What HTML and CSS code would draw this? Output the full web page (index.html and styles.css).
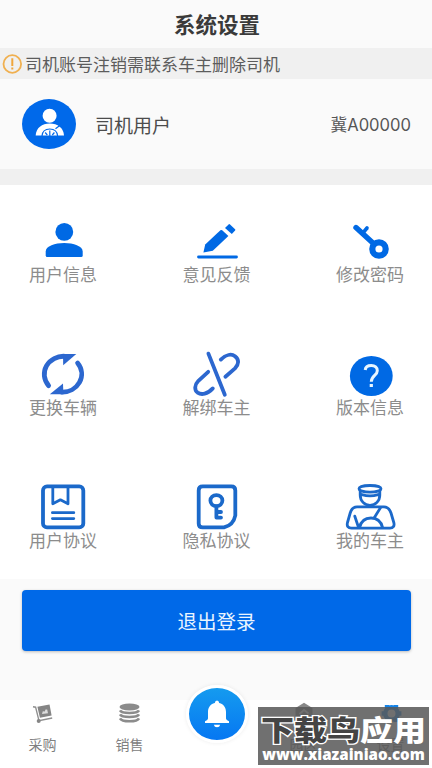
FILE: index.html
```html
<!DOCTYPE html>
<html lang="zh-CN">
<head>
    <meta charset="UTF-8">
    <meta name="viewport" content="width=device-width, initial-scale=1.0">
    <title>系统设置</title>
    <link rel="stylesheet" href="styles.css">
</head>
<body>

    <div class="page">
        <header class="title-bar">
            <h1>系统设置</h1>
        </header>

        <div class="notice">
            <svg class="notice-icon" width="20" height="20" viewBox="0 0 20 20">
                <circle cx="10.3" cy="10" r="8.8" fill="none" stroke="#f0b050" stroke-width="1.8"/>
                <path d="M10.3 4.3v7.6M10.3 13.4v2.2" fill="none" stroke="#f0a63c" stroke-width="2"/>
            </svg>
            <span>司机账号注销需联系车主删除司机</span>
        </div>

        <section class="user">
            <svg class="avatar" width="54" height="50" viewBox="0 0 54 50">
                <ellipse cx="27" cy="25" rx="27" ry="25" fill="#0069ea"/>
                <circle cx="27.6" cy="16.8" r="7" fill="#fff"/>
                <path d="M13.7 36.6C14 29 20 24.6 27.8 24.6S41.6 29 42 36.6Z" fill="#fff"/>
                <path d="M20 37C20.4 32 23.4 30 27.8 30S35.2 32 35.6 37M27.8 31.5V37M23.2 33.5L25.3 36M32.4 33.5L30.3 36M33.5 29.8L38.5 26" fill="none" stroke="#0069ea" stroke-width="1.2"/>
            </svg>
            <span class="user-name">司机用户</span>
            <span class="plate">冀A00000</span>
        </section>

        <section class="menu">
            <div class="menu-item">
                <svg class="menu-icon" viewBox="0 0 68 50">
                    <circle class="fill" cx="35.3" cy="15.9" r="8.9"/>
                    <path class="fill" d="M16.7 39.5V35.5C16.7 30 26 27 35.2 27S53.7 30 53.7 35.5V39.5Q53.7 41 52.2 41H18.2Q16.7 41 16.7 39.5Z"/>
                </svg>
                <span>用户信息</span>
            </div>
            <div class="menu-item">
                <svg class="menu-icon" viewBox="0 0 68 50">
                    <path class="fill" d="M20.4 36.6L22.2 28.6 37.4 14.2Q38.4 13.6 39.2 14.2L45.4 19.9 29.8 34.8Z"/>
                    <path class="fill" d="M42 12L45.6 8.4Q46.3 7.8 47 8.4L52.1 13.2Q52.7 13.9 52.1 14.6L48.8 18Z"/>
                    <path class="line thin" d="M15.5 41H53.5"/>
                </svg>
                <span>意见反馈</span>
            </div>
            <div class="menu-item">
                <svg class="menu-icon" viewBox="0 0 68 50">
                    <circle cx="43" cy="33" r="6.7" fill="none" stroke="#0069e4" stroke-width="6.2"/>
                    <path d="M20 11.6L38 28" fill="none" stroke="#0069e4" stroke-width="5.4" stroke-linecap="round"/>
                    <path d="M26.5 17.5L31 12" fill="none" stroke="#0069e4" stroke-width="3.6" stroke-linecap="round"/>
                </svg>
                <span>修改密码</span>
            </div>

            <div class="menu-item">
                <svg class="menu-icon soft" viewBox="0 0 68 50">
                    <path class="line thick" d="M19.6 36.6A19.3 18 0 0 1 36 7.3"/>
                    <path class="fill" d="M34 5L47.3 5 34.2 16.2Z"/>
                    <path class="line thick" d="M48.6 14A19.3 18 0 0 1 32.4 43"/>
                    <path class="fill" d="M34.4 45.3L20.8 45.3 34 34.6Z"/>
                </svg>
                <span>更换车辆</span>
            </div>
            <div class="menu-item">
                <svg class="menu-icon soft" viewBox="0 0 68 50">
                    <path class="line" d="M25.4 4.6L41.8 45.8"/>
                    <path class="line" d="M37.8 10.6C43 5.4 48.5 4.6 52 7.3C56.3 10.6 56 15.4 52 19.4L42.4 27.8"/>
                    <path class="line" d="M25.2 22.8L15.4 31.8C11.4 36 11.2 41 14.6 43.6C18.4 46.2 24.5 45.2 29.8 39.4"/>
                </svg>
                <span>解绑车主</span>
            </div>
            <div class="menu-item">
                <svg class="menu-icon" viewBox="0 0 68 50">
                    <ellipse class="fill" cx="35.3" cy="27" rx="21.4" ry="20"/>
                    <path d="M29.2 21C29.5 18 32 16.6 35.3 16.6C39 16.6 41.3 18.6 41.3 21.7C41.3 26.4 35.3 26.5 35.3 32.8" fill="none" stroke="#e8f6ff" stroke-width="3"/>
                    <rect x="33.7" y="35" width="3.2" height="3" fill="#e8f6ff"/>
                </svg>
                <span>版本信息</span>
            </div>

            <div class="menu-item">
                <svg class="menu-icon deep" viewBox="0 0 68 50">
                    <rect class="line" x="14" y="4.4" width="40.3" height="41" rx="4"/>
                    <path class="line thin" d="M23.8 4.4V21.8L31.4 17.8 39 21.8V4.4M23.4 30.7H44.8M23.4 36.6H44.8"/>
                </svg>
                <span>用户协议</span>
            </div>
            <div class="menu-item">
                <svg class="menu-icon deep" viewBox="0 0 68 50">
                    <path class="line" d="M19.7 4.4H48.3Q52.3 4.4 52.3 8.4V33.5C51 40 47 44 41 45.4H19.7Q15.7 45.4 15.7 41.4V8.4Q15.7 4.4 19.7 4.4Z"/>
                    <ellipse class="line" cx="33.4" cy="18.6" rx="6" ry="5.5"/>
                    <path class="line" d="M33.4 24.4V35.6M34 30H38M34 35.6H38"/>
                </svg>
                <span>隐私协议</span>
            </div>
            <div class="menu-item">
                <svg class="menu-icon deep" viewBox="0 0 68 50">
                    <ellipse class="line thin" cx="34" cy="6.8" rx="11" ry="3.3"/>
                    <path class="line thin" d="M24.2 9.5V13C24.2 19 28.5 23.3 34 23.3S43.8 19 43.8 13V9.5M26 12.7Q34 15.2 42 12.7"/>
                    <path class="line thin" d="M21 24.8H48C52.5 24.8 53.8 27.5 55 31L57.8 40.5C58.8 44 57 46.2 54 46.2H15.5C12 46.2 10.6 44 11.5 40.5L14.2 31C15.2 27.5 16.8 24.8 21 24.8Z"/>
                    <path class="line thin" d="M23.5 45.6C25 39 29.5 36 35 36S45 39 46.6 45.6M18.8 34.2L22.4 45M44.6 25.6L38.4 35.4"/>
                </svg>
                <span>我的车主</span>
            </div>
        </section>

        <section class="actions">
            <button class="logout">退出登录</button>
        </section>

        <nav class="tabs">
            <div class="tab">
                <svg class="tab-icon" viewBox="0 0 24 24">
                    <path d="M2 4.8L4.6 5.2 8 18.8 21.2 16" fill="none" stroke="#8f8f8f" stroke-width="1.4"/>
                    <path d="M6.4 4.8L18.5 2.6 20.6 13.4 8.9 15.8Z" fill="#858585"/>
                    <path d="M11 12L11.8 9.3 13.8 9.6 14.5 7.5 16.2 7.5 17 11.2Z" fill="#ddd"/>
                    <circle cx="7.7" cy="19" r="2" fill="#858585"/>
                </svg>
                <span>采购</span>
            </div>
            <div class="tab">
                <svg class="tab-icon" viewBox="0 0 24 24">
                    <ellipse cx="11.5" cy="5" rx="10" ry="3.4" fill="#8c8c8c"/>
                    <path d="M2 8.3C4 11.8 19 11.8 21 8.3M2 12.3C4 15.8 19 15.8 21 12.3M2 16.3C4 20.2 19 20.2 21 16.3" fill="none" stroke="#8c8c8c" stroke-width="2.6"/>
                </svg>
                <span>销售</span>
            </div>
            <div class="tab">
                <div class="bell">
                    <svg width="26" height="28" viewBox="0 0 26 28">
                        <path d="M13 .5Q15 .5 15.2 3C20 4.2 22 8 22 12V18.5Q22 20 25 21.3V23H1V21.3Q4 20 4 18.5V12C4 8 6 4.2 10.8 3Q11 .5 13 .5Z" fill="#fff"/>
                        <path d="M9.8 24.8H16.2Q15.5 27.3 13 27.3T9.8 24.8Z" fill="#fff"/>
                    </svg>
                </div>
            </div>
            <div class="tab">
                <svg class="tab-icon" viewBox="0 0 24 24">
                    <path d="M12 .8L20.5 6V17L12 22 3.5 17V6Z" fill="#888"/>
                    <path d="M7.5 12L12 8 16.5 11.5" fill="none" stroke="#fff" stroke-width="1.8"/>
                </svg>
                <span>园区</span>
            </div>
            <div class="tab">
                <svg class="tab-icon" viewBox="0 0 24 24">
                    <circle cx="12.5" cy="11.5" r="6.2" fill="none" stroke="#1684e8" stroke-width="4.4"/>
                    <path d="M8 3V6M17 3V6M8 17V20M17 17V20M2.6 11.5H6M19 11.5H22.4" fill="none" stroke="#1684e8" stroke-width="4.4"/>
                </svg>
                <span>设置</span>
            </div>

            <div class="watermark">
                <div class="mark-name"><span class="outlined">下载鸟</span>应用</div>
                <div class="mark-url">www.xiazainiao.com</div>
            </div>
        </nav>
    </div>

</body>
</html>
```
FILE: styles.css
```css
* {
    box-sizing: border-box;
}
body {
    margin: 0;
    font-family: "Noto Sans CJK SC", sans-serif;
    background-color: #fafafa;
    color: #4c4c4c;
}
svg {
    display: block;
    flex-shrink: 0;
}
.page {
    display: flex;
    flex-direction: column;
    width: 432px;
    height: 768px;
    overflow: hidden;
}
.title-bar {
    display: flex;
    align-items: center;
    justify-content: center;
    height: 48px;
    padding-left: 2px;
}
h1 {
    margin: 0;
    font-size: 21.5px;
    line-height: 30px;
    font-weight: 700;
    color: #3a3a3a;
}
.notice {
    display: flex;
    align-items: center;
    gap: 3px;
    height: 31px;
    padding-left: 2px;
    background-color: #f0f0f0;
    font-size: 17px;
    line-height: 24px;
    color: #5c5c5c;
}
.user {
    display: flex;
    align-items: center;
    height: 106px;
    padding: 0 21px 0 22px;
    border-bottom: 16px solid #f0f0f0;
}
.user-name {
    margin-left: 19px;
    font-size: 19px;
}
.plate {
    margin-left: auto;
    font-family: Inter, "Noto Sans CJK SC", sans-serif;
    font-size: 16.6px;
    color: #555;
}

/* menu grid */
.menu {
    display: grid;
    grid-template-columns: repeat(3, 68px);
    grid-auto-rows: 133px;
    justify-content: space-between;
    height: 394px;
    padding: 0 28px 0 29px;
    background-color: #fff;
}
.menu-item {
    padding-top: 31px;
    font-size: 17px;
    line-height: 17px;
    color: #8c8c8c;
    white-space: nowrap;
}
.menu-icon {
    width: 68px;
    height: 50px;
    margin-bottom: -1px;
    color: #0069e4;
}
.menu-icon.soft {
    color: #2c67cf;
}
.menu-icon.deep {
    color: #1b69ca;
}
.fill {
    fill: currentColor;
}
.line {
    fill: none;
    stroke: currentColor;
    stroke-width: 3.8;
    stroke-linecap: round;
    stroke-linejoin: round;
}
.line.thin {
    stroke-width: 2.8;
}
.line.thick {
    stroke-width: 4.8;
}

.actions {
    height: 121px;
    padding: 11px 21px 0 22px;
}
.logout {
    display: block;
    width: 100%;
    height: 61px;
    padding: 0;
    border: none;
    border-radius: 4px;
    background-color: #0069e8;
    box-shadow: 0 1px 3px rgba(0,0,0,0.25);
    color: #eaf5ff;
    font-family: inherit;
    font-size: 19.5px;
}

/* bottom tabs */
.tabs {
    position: relative;
    display: grid;
    grid-template-columns: repeat(5, 87px);
    height: 68px;
    margin-left: -1px;
    background-color: #fff;
}
.tab {
    display: flex;
    flex-direction: column;
    align-items: center;
    padding-top: 2px;
    font-size: 14px;
    line-height: 20px;
    color: #808080;
}
.tab-icon {
    width: 24px;
    height: 24px;
    margin-bottom: 8px;
}
.bell {
    display: flex;
    align-items: center;
    justify-content: center;
    flex-shrink: 0;
    width: 62px;
    height: 58px;
    margin-top: -17px;
    border: 3px solid #fff;
    border-radius: 50%;
    background: linear-gradient(#159bef, #0677f2);
    box-shadow: 0 0 4px rgba(0,0,0,0.08);
}
.watermark {
    position: absolute;
    left: 259px;
    top: 7px;
    width: 171px;
    height: 58px;
    background-color: rgba(88,88,88,0.86);
    color: #fff;
    text-align: center;
    white-space: nowrap;
}
.mark-name {
    height: 38px;
    padding-top: 4px;
    font-size: 33px;
    font-weight: 900;
    line-height: 36px;
    transform: scaleY(0.86);
}
.outlined {
    color: #444;
    -webkit-text-stroke: 3px #fff;
    paint-order: stroke fill;
}
.mark-url {
    font-family: "Open Sans", sans-serif;
    font-size: 15.1px;
    font-weight: 800;
    line-height: 18px;
}
```
